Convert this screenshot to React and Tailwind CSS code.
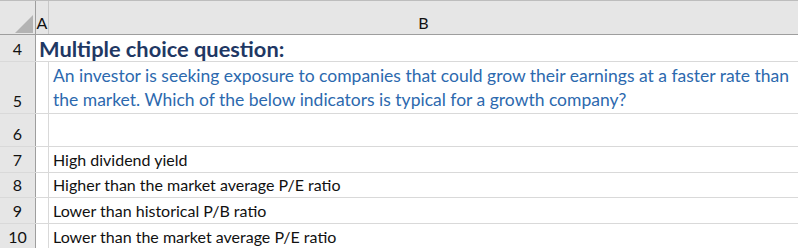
export default function App() {
  const rows = [
    { n: '6', h: 'h-[33px]', text: '' },
    { n: '7', h: 'h-[26px]', text: 'High dividend yield' },
    { n: '8', h: 'h-[25px]', text: 'Higher than the market average P/E ratio' },
    { n: '9', h: 'h-[26px]', text: 'Lower than historical P/B ratio' },
    { n: '10', h: 'h-[26px]', text: 'Lower than the market average P/E ratio' },
  ];

  const rowHead = 'w-[36px] shrink-0 bg-[#e6e6e6] border-r border-r-[#9e9e9e] flex items-end justify-center pb-[2px] leading-[20px] text-[16px]';

  return (
    <div className="w-[798px] h-[248px] overflow-hidden bg-white text-[16px] text-[#111] font-['Lato','Liberation_Sans',sans-serif]">
      {/* column headers */}
      <div className="flex h-[35px] bg-[#e6e6e6] border-t border-t-[#bdbdbd] border-b border-b-[#9e9e9e] text-[16px]">
        <div className="w-[36px] border-r border-r-[#9e9e9e] relative">
          <svg className="absolute left-[15px] top-[14px]" width="18" height="18" viewBox="0 0 18 18">
            <polygon points="18,0 18,18 0,18" fill="#b3b3b3" />
          </svg>
        </div>
        <div className="w-[13px] border-r border-r-[#c8c8c8] flex items-end justify-center pb-[3px] leading-none">A</div>
        <div className="flex-1 flex items-end justify-center pb-[3px] leading-none">B</div>
      </div>

      {/* row 4: title spills from column A over B */}
      <div className="flex h-[27px] border-b border-b-[#d9d9d9]">
        <div className={rowHead}>4</div>
        <div className="flex-1 pl-[3px] flex items-end leading-[24px] whitespace-nowrap font-bold text-[21.8px] text-[#1f3864]">
          Multiple choice question:
        </div>
      </div>

      {/* row 5: wrapped question */}
      <div className="flex h-[52px] border-b border-b-[#d9d9d9]">
        <div className={rowHead}>5</div>
        <div className="w-[13px] shrink-0 border-r border-r-[#d9d9d9]" />
        <div className="flex-1 pl-[4px] flex flex-col justify-end pb-[2px] whitespace-nowrap text-[17.5px] text-[#2c69ae]">
          <div className="leading-[26px]">An investor is seeking exposure to companies that could grow their earnings at a faster rate than</div>
          <div className="leading-[22px]">the market. Which of the below indicators is typical for a growth company?</div>
        </div>
      </div>

      {rows.map(r => (
        <div key={r.n} className={`flex ${r.h} border-b border-b-[#d9d9d9]`}>
          <div className={rowHead}>{r.n}</div>
          <div className="w-[13px] shrink-0 border-r border-r-[#d9d9d9]" />
          <div className="flex-1 pl-[4px] flex items-end pb-[2px] leading-[20px] whitespace-nowrap">
            {r.text}
          </div>
        </div>
      ))}
    </div>
  );
}
